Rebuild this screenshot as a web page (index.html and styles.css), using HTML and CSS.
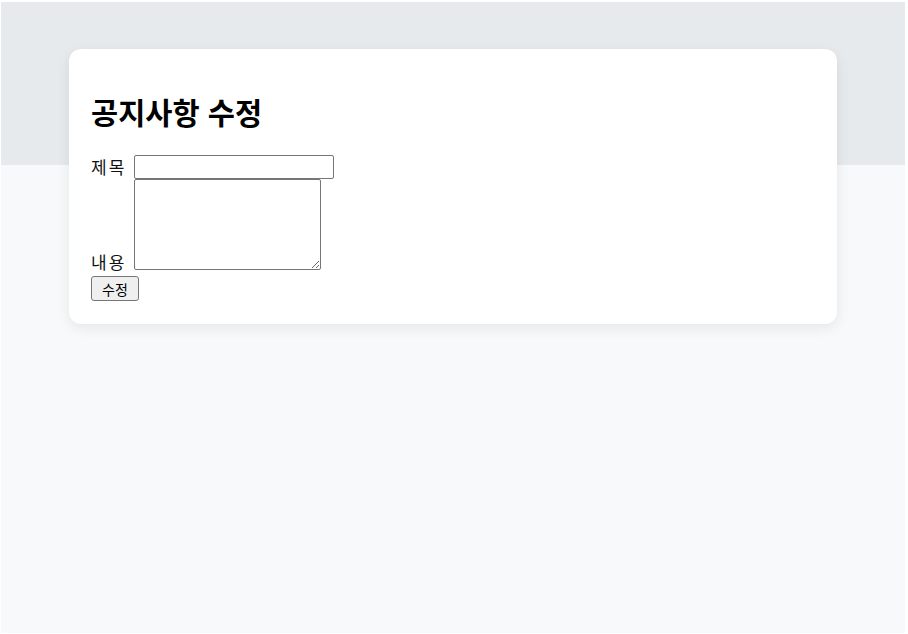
FILE: index.html
```html
<!DOCTYPE html>
<html lang="ko">
<head>
  <meta charset="UTF-8">
  <meta name="viewport" content="width=device-width, initial-scale=1.0">
  <title>공지사항 수정</title>
  <link rel="stylesheet" href="styles.css">
</head>
<body>

  <div class="page">
    <div class="card">
      <h2>공지사항 수정</h2>
      <form id="editNoticeForm">
        <div class="row row-title">
          <label for="noticeTitle">제목</label>
          <input type="text" id="noticeTitle">
        </div>
        <div class="row row-content">
          <label for="noticeContent">내용</label>
          <textarea id="noticeContent"></textarea>
        </div>
        <button type="submit">수정</button>
      </form>
    </div>
  </div>

</body>
</html>
```

FILE: styles.css
```css
body {
  font-family: "Noto Sans CJK KR", "Noto Sans", sans-serif;
  font-size: 16px;
  color: #000;
  background-color: #fff;
  margin: 0;
  padding: 2px 3px 1px 1px;
}
.page {
  min-height: 631px;
  background: linear-gradient(#e7eaed 163px, #f8f9fb 163px);
  padding-top: 47px;
  box-sizing: border-box;
}
.card {
  width: 768px;
  margin: 0 auto;
  background-color: #fff;
  border-radius: 12px;
  box-shadow: 0 4px 14px rgba(0, 0, 0, 0.08);
  padding: 22px 22px 23px;
  box-sizing: border-box;
}
.card h2 {
  font-size: 29.5px;
  line-height: 36px;
  font-weight: bold;
  margin: 22px 0 26px;
}

.row {
  display: flex;
}
.row-title {
  align-items: center;
}
.row-content {
  align-items: flex-end;
}
.row label {
  flex: 0 0 auto;
  font-size: 17px;
  letter-spacing: 2px;
  margin-right: 8px;
  line-height: 20px;
  color: #111;
}
.row-content label {
  line-height: 17px;
}

#noticeTitle {
  width: 200px;
  height: 24px;
  box-sizing: border-box;
  border: 1px solid #767676;
  border-radius: 2px;
  padding: 1px 2px;
  margin: 0;
}
#noticeContent {
  width: 187px;
  height: 91px;
  box-sizing: border-box;
  border: 1px solid #767676;
  border-radius: 2px;
  margin: 0;
}

#editNoticeForm button {
  margin-top: 6px;
  width: 48px;
  height: 25px;
  font-family: "Noto Sans CJK KR", sans-serif;
  font-size: 14px;
  line-height: 1;
  color: #000;
  background-color: #efefef;
  border: 1px solid #767676;
  border-radius: 3px;
  padding: 0;
}
```
